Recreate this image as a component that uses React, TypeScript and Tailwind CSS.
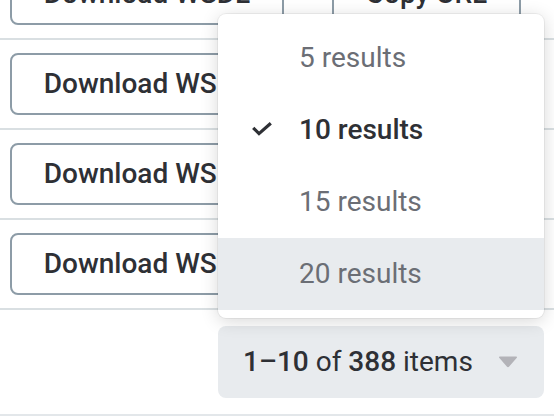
import { useState } from 'react';

const options = [5, 10, 15, 20];

function ButtonGroup() {
  return (
    <div className="flex h-[62px] text-[28px] font-medium text-[#2e3035]">
      <button className="flex w-[274px] items-center justify-center rounded-l-[8px] border-2 border-[#8d9ca7] bg-white">
        Download WSDL
      </button>
      <button className="w-[50px] border-y-2 border-r-2 border-[#8d9ca7] bg-white" aria-label="More" />
      <button className="flex w-[187px] items-center justify-center rounded-r-[8px] border-y-2 border-r-2 border-[#8d9ca7] bg-white">
        Copy URL
      </button>
    </div>
  );
}

export default function App() {
  const [pageSize] = useState(10);
  const [hovered] = useState(20);

  return (
    <div className="relative h-[416px] w-[554px] overflow-hidden bg-white font-['Roboto',sans-serif]">
      <div className="-mt-[50px]">
        {[0, 1, 2, 3].map((i) => (
          <div key={i} className="flex h-[90px] items-center border-b-2 border-[#d9dfe2] pl-[10px]">
            <ButtonGroup />
          </div>
        ))}

        <div className="flex h-[106px] items-center border-b-2 border-[#e3e7ea] pl-[218px]">
          <button className="flex h-[72px] w-[326px] items-center justify-between rounded-[8px] bg-[#e8ebee] pl-[25px] pr-[26px] text-[28px] text-[#2e3035]">
            <span>
              <span className="font-medium">1–10</span> of <span className="font-medium">388</span> items
            </span>
            <svg width="20" height="12" viewBox="0 0 20 12" fill="#b3b3b8">
              <path d="M2 0.5 H18 Q19.8 0.5 18.6 2 L11.2 10.6 Q10 12 8.8 10.6 L1.4 2 Q0.2 0.5 2 0.5 Z" />
            </svg>
          </button>
        </div>
      </div>

      <ul className="absolute left-[218px] top-[14px] w-[326px] rounded-[8px] bg-white py-[8px] shadow-[0_3px_18px_rgba(0,0,0,0.16)] ring-1 ring-black/5">
        {options.map((n) => {
          const selected = n === pageSize;
          return (
            <li
              key={n}
              className={`relative flex h-[72px] items-center pl-[81px] text-[28px] ${
                n === hovered ? 'bg-[#e8ebee]' : ''
              } ${selected ? 'font-medium text-[#2e3035]' : 'text-[#6b6e75]'}`}
            >
              {selected && (
                <svg
                  className="absolute left-[34px] top-[28px]"
                  width="20"
                  height="14"
                  viewBox="0 0 20 14"
                  fill="none"
                  stroke="#2e3035"
                  strokeWidth="3.2"
                  strokeLinejoin="miter"
                >
                  <path d="M1.2 5.8 L7 11.6 L18.8 1.2" />
                </svg>
              )}
              {n} results
            </li>
          );
        })}
      </ul>
    </div>
  );
}
